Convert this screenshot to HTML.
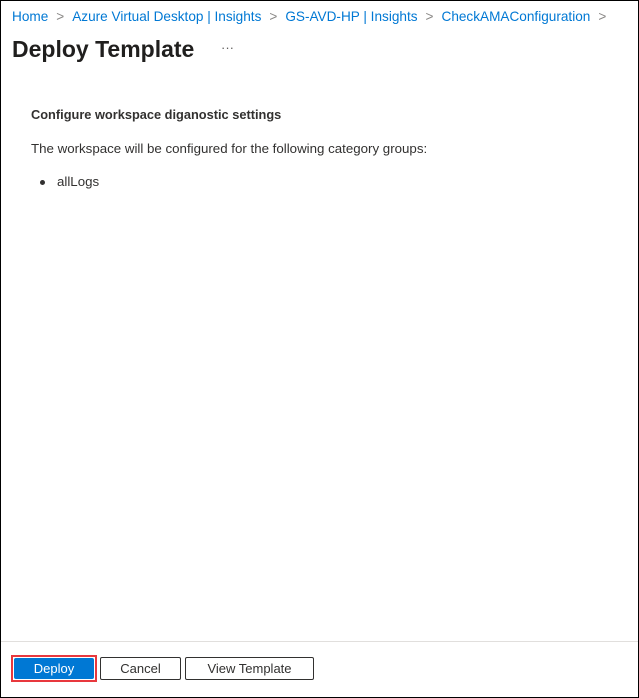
<!DOCTYPE html>
<html><head><style>
*{margin:0;padding:0;box-sizing:border-box}
body{width:639px;height:698px;position:relative;background:#fff;font-family:"Segoe UI","Liberation Sans",sans-serif;color:#323130;overflow:hidden}
.frame{position:absolute;left:0;top:0;width:639px;height:698px;border:1px solid #000}
.bc{position:absolute;left:12px;top:9px;font-size:13.6px;color:#0078d4;white-space:nowrap}
.bc span.s{color:#8a8886;margin:0 8px}
h1{position:absolute;left:12px;top:36px;font-size:23px;font-weight:600;color:#201f1e}
.dots{position:absolute;left:221px;top:40px;font-size:13px;color:#605e5c}
.b{position:absolute;left:31px;top:107px;font-size:12.8px;font-weight:600;color:#323130}
.p{position:absolute;left:31px;top:141px;font-size:13.3px}
.li{position:absolute;left:57px;top:174px;font-size:13.3px}
.dot{position:absolute;left:40px;top:180px;width:5px;height:5px;border-radius:50%;background:#323130}
.sep{position:absolute;left:1px;top:641px;width:637px;height:1px;background:#e1dfdd}
.red{position:absolute;left:11px;top:655px;width:86px;height:27px;border:2px solid #e8383d}
.btn{position:absolute;font-size:13px;text-align:center;border-radius:2px}
</style></head><body>
<div class="frame"></div>
<div class="bc">Home<span class="s">&gt;</span>Azure Virtual Desktop | Insights<span class="s">&gt;</span>GS-AVD-HP | Insights<span class="s">&gt;</span>CheckAMAConfiguration<span class="s">&gt;</span></div>
<h1>Deploy Template</h1>
<div class="dots">···</div>
<div class="b">Configure workspace diganostic settings</div>
<div class="p">The workspace will be configured for the following category groups:</div>
<div class="dot"></div>
<div class="li">allLogs</div>
<div class="sep"></div>
<div class="red"></div>
<div class="btn" style="left:14px;top:658px;width:80px;height:21px;background:#0078d4;color:#fff;line-height:21px">Deploy</div>
<div class="btn" style="left:100px;top:657px;width:81px;height:23px;border:1px solid #323130;line-height:21px">Cancel</div>
<div class="btn" style="left:185px;top:657px;width:129px;height:23px;border:1px solid #323130;line-height:21px">View Template</div>
</body></html>
